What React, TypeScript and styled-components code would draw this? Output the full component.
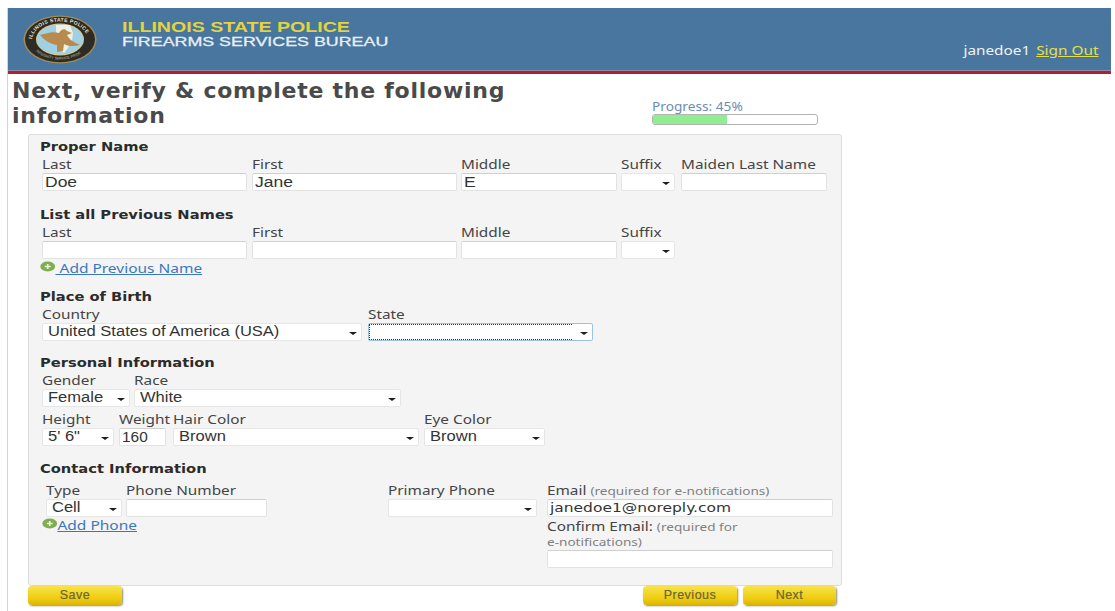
import React from "react";
import styled, { createGlobalStyle } from "styled-components";

const GlobalStyle = createGlobalStyle`
  html, body {
    margin: 0;
    padding: 0;
    background: #fff;
    overflow: hidden;
  }
  body {
    font-family: "Noto Sans", "DejaVu Sans", sans-serif;
    color: #333;
  }
`;

const SealLogo = () => (
  <svg width="74" height="49" viewBox="0 0 74 49">
    <defs>
      <path id="sealTop" d="M9 25 A28 18.5 0 0 1 65 25" />
      <path id="sealBottom" d="M7 24 A30 20.5 0 0 0 67 24" />
    </defs>
    <ellipse cx="37" cy="24.5" rx="36.5" ry="24" fill="#a08c58" />
    <ellipse cx="37" cy="24.5" rx="35" ry="22.8" fill="#2e2b25" />
    <ellipse cx="37" cy="24.5" rx="24" ry="16" fill="#d8c88e" />
    <ellipse cx="37" cy="24.5" rx="23" ry="15" fill="#9fd0e4" />
    <path d="M33 10 L47 10 L50 18 L49 26 L45 33 L41 38 L36 34 L33 24 Z" fill="#eef0e4" />
    <path
      d="M17 20 C24 18 30 16 36 18 C38 14 42 13 44 16 L49 18 L44 20 C46 24 50 27 57 30 C50 32 44 31 41 29 L40 36 L34 37 L34 30 C27 29 21 25 17 20 Z"
      fill="#b98a4e"
    />
    <text fontFamily="Liberation Sans, sans-serif" fontSize="5" fontWeight="700" fill="#ece6cc">
      <textPath href="#sealTop" startOffset="1" textLength="66">
        ILLINOIS STATE POLICE
      </textPath>
    </text>
    <text fontFamily="Liberation Sans, sans-serif" fontSize="3.6" fill="#c9c2a4">
      <textPath href="#sealBottom" startOffset="14">
        INTEGRITY SERVICE PRIDE
      </textPath>
    </text>
  </svg>
);

const Page = styled.div`
  width: 1115px;
  height: 611px;
  padding: 8px 4px 0 7px;
  box-sizing: border-box;
  overflow: hidden;
`;

const Shell = styled.div`
  border-left: 1px solid #c4d9e8;
  height: 100%;
`;

const Header = styled.header`
  height: 63px;
  background: #48769f;
  border-bottom: 3px solid #b21f35;
  box-shadow: inset 0 -1px 0 #8d8da3;
  display: flex;
`;

const Logo = styled.div`
  padding: 7px 0 0 15px;
  width: 114px;
  box-sizing: border-box;
`;

const Agency = styled.div`
  padding-top: 12px;
  font-family: "Liberation Sans", Arial, sans-serif;
  font-size: 13px;
  line-height: 15px;
`;

const AgencyTop = styled.div`
  color: #e3d43d;
  font-size: 14px;
  font-weight: 700;
  white-space: nowrap;
  transform: scaleX(1.4);
  transform-origin: left;
`;

const AgencySub = styled.div`
  color: #e8eef3;
  font-weight: 400;
  -webkit-text-stroke: 0.3px #e8eef3;
  white-space: nowrap;
  line-height: 14px;
  transform: scaleX(1.372);
  transform-origin: left;
`;

const UserBox = styled.div`
  margin-left: auto;
  padding: 34px 11px 0 0;
  font-size: 13px;
  line-height: 17px;
  color: #f0f3f6;
  white-space: nowrap;
  transform: scaleX(1.18);
  transform-origin: right;
`;

const SignOut = styled.a`
  color: #e4e04a;
  text-decoration: underline;
  margin-left: 5px;
`;

const TitleRow = styled.div`
  display: flex;
  align-items: flex-start;
  height: 60px;
`;

const Title = styled.h1`
  width: 640px;
  box-sizing: border-box;
  margin: 0;
  padding: 4px 120px 0 4px;
  font-family: "DejaVu Sans", sans-serif;
  font-size: 22px;
  line-height: 25px;
  font-weight: 700;
  letter-spacing: 0.75px;
  color: #4a4a4a;
`;

const Progress = styled.div`
  padding: 26px 0 0 4px;
  width: 166px;
`;

const ProgressLabel = styled.div`
  font-size: 12px;
  line-height: 14px;
  color: #6b8db5;
  white-space: nowrap;
  transform: scaleX(1.14);
  transform-origin: left;
`;

const ProgressTrack = styled.div`
  height: 9px;
  border: 1px solid #b4b4b4;
  border-radius: 3px;
  background: #fff;
  overflow: hidden;
`;

const ProgressFill = styled.div`
  height: 100%;
  background: #90ee90;
`;

const Panel = styled.main`
  margin: 0 0 0 20px;
  width: 814px;
  height: 452px;
  box-sizing: border-box;
  background: #f4f4f4;
  border: 1px solid #dcdcdc;
  border-radius: 3px;
  padding: 4px 0 0 11px;
`;

const SectionTitle = styled.h2<{ $top?: number }>`
  margin: ${(p) => p.$top ?? 0}px 0 0;
  padding-bottom: 1px;
  font-family: "DejaVu Sans", sans-serif;
  font-size: 13px;
  line-height: 16px;
  font-weight: 700;
  color: #2b2b2b;
  white-space: nowrap;
  transform: scaleX(1.13);
  transform-origin: left;
`;

const Row = styled.div<{ $left?: number; $top?: number; $gap?: number }>`
  display: flex;
  gap: ${(p) => p.$gap ?? 5}px;
  margin: ${(p) => p.$top ?? 0}px 0 0 ${(p) => p.$left ?? 2}px;
`;

const Field = styled.div<{ $w: number; $ml?: number }>`
  width: ${(p) => p.$w}px;
  margin-left: ${(p) => p.$ml ?? 0}px;
  flex: none;
`;

const Label = styled.label`
  display: block;
  font-size: 13px;
  line-height: 17px;
  height: 17px;
  color: #444;
  white-space: nowrap;
  transform: scaleX(1.18);
  transform-origin: left;
`;

const InputBox = styled.div`
  height: 18px;
  box-sizing: border-box;
  background: #fff;
  border: 1px solid #e2e2e2;
  border-top-color: #d0d0d0;
  border-radius: 2px;
  padding: 0 4px 0 2px;
  font-family: "Liberation Sans", Arial, sans-serif;
  font-size: 14px;
  line-height: 16px;
  color: #333;
  white-space: nowrap;
`;

const ValueText = styled.span<{ $x: number }>`
  display: inline-block;
  transform: scaleX(${(p) => p.$x});
  transform-origin: left;
`;

const EmailBox = styled(InputBox)`
  font-family: "DejaVu Sans", sans-serif;
  font-size: 13px;
`;

const Input = ({ value, stretch = 1.25 }: { value?: string; stretch?: number }) => (
  <InputBox>{value && <ValueText $x={stretch}>{value}</ValueText>}</InputBox>
);

const SelectBox = styled.div<{ $focus?: boolean }>`
  position: relative;
  height: 18px;
  box-sizing: border-box;
  background: #fff;
  border: 1px solid ${(p) => (p.$focus ? "#9cc3e3" : "#e6e6e6")};
  border-radius: 2px;
  padding: 0 16px 0 5px;
  font-family: "Liberation Sans", Arial, sans-serif;
  font-size: 14px;
  line-height: 15px;
  color: #333;
  white-space: nowrap;
`;

const Caret = styled.span`
  position: absolute;
  right: 4px;
  top: 8px;
  border-top: 3px solid #1c1c1c;
  border-left: 4px solid transparent;
  border-right: 4px solid transparent;
`;

const FocusRing = styled.span`
  position: absolute;
  left: 0;
  top: 0;
  bottom: 0;
  right: 20px;
  border: 1px dotted #333;
  border-right: 0;
`;

const Select = ({ value, focus }: { value?: string; focus?: boolean }) => (
  <SelectBox $focus={focus}>
    {focus && <FocusRing />}
    {value && <ValueText $x={1.18}>{value}</ValueText>}
    <Caret />
  </SelectBox>
);

const AddLink = styled.a<{ $gap: number }>`
  display: inline-flex;
  align-items: center;
  font-size: 13px;
  line-height: 14px;
  color: #3a78bd;
  text-decoration: underline;
  white-space: pre;
  transform: scaleX(1.19);
  transform-origin: left;

  svg {
    margin: -3px ${(p) => p.$gap}px 0 0;
    flex: none;
  }
`;

const AddRow = styled.div<{ $left: number; $top: number }>`
  display: flex;
  margin: ${(p) => p.$top}px 0 0 ${(p) => p.$left}px;
  height: 14px;
`;

const PlusIcon = () => (
  <svg width="13" height="11" viewBox="0 0 13 11">
    <ellipse cx="6.5" cy="5.5" rx="6.2" ry="5" fill="#7fae4f" />
    <path d="M6.5 3v5M4 5.5h5" stroke="#e8f3d8" strokeWidth="1.4" />
  </svg>
);

const ContactRow = styled.div`
  display: flex;
  margin-top: 4px;
`;

const ContactLeft = styled.div`
  width: 348px;
  flex: none;
  padding-left: 6px;
  box-sizing: border-box;
`;

const PrimaryColumn = styled.div`
  width: 159px;
  flex: none;
`;

const EmailColumn = styled.div`
  width: 286px;
  flex: none;
`;

const Hint = styled.span`
  font-size: 11.5px;
  color: #808080;
`;

const ConfirmLabel = styled.div`
  margin-top: 2px;
  font-size: 13px;
  line-height: 15px;
  color: #444;
  white-space: nowrap;
  transform: scaleX(1.18);
  transform-origin: left;
`;

const HintLine = styled.div`
  font-size: 11.5px;
  line-height: 15px;
  margin-bottom: 1px;
  color: #808080;
  white-space: nowrap;
  transform: scaleX(1.18);
  transform-origin: left;
`;

const Actions = styled.div`
  display: flex;
  gap: 6px;
  width: 808px;
  margin-left: 20px;
`;

const ActionButton = styled.button<{ $w: number; $push?: boolean }>`
  width: ${(p) => p.$w}px;
  height: 19px;
  margin-left: ${(p) => (p.$push ? "auto" : 0)};
  padding: 0;
  border: 0;
  border-radius: 4px;
  background: linear-gradient(#f7e34a, #eeca0c 70%, #d9b408);
  box-shadow: 1px 1px 2px #8d8d6a;
  font-family: "Liberation Sans", Arial, sans-serif;
  font-size: 12.5px;
  line-height: 17px;
  letter-spacing: 0.5px;
  color: #6b6436;
  -webkit-text-stroke: 0.2px #6b6436;
`;

export default function App() {
  return (
    <>
      <GlobalStyle />
      <Page>
        <Shell>
          <Header>
            <Logo>
              <SealLogo />
            </Logo>
            <Agency>
              <AgencyTop>ILLINOIS STATE POLICE</AgencyTop>
              <AgencySub>FIREARMS SERVICES BUREAU</AgencySub>
            </Agency>
            <UserBox>
              janedoe1<SignOut href="#">Sign Out</SignOut>
            </UserBox>
          </Header>
          <TitleRow>
            <Title>Next, verify &amp; complete the following information</Title>
            <Progress>
              <ProgressLabel>Progress: 45%</ProgressLabel>
              <ProgressTrack>
                <ProgressFill style={{ width: "45%" }} />
              </ProgressTrack>
            </Progress>
          </TitleRow>
          <Panel>
            <SectionTitle>Proper Name</SectionTitle>
            <Row>
              <Field $w={205}>
                <Label>Last</Label>
                <Input value="Doe" />
              </Field>
              <Field $w={205}>
                <Label>First</Label>
                <Input value="Jane" />
              </Field>
              <Field $w={156} $ml={-1}>
                <Label>Middle</Label>
                <Input value="E" />
              </Field>
              <Field $w={54} $ml={-1}>
                <Label>Suffix</Label>
                <Select />
              </Field>
              <Field $w={146} $ml={1}>
                <Label>Maiden Last Name</Label>
                <Input />
              </Field>
            </Row>
            <SectionTitle $top={16}>List all Previous Names</SectionTitle>
            <Row>
              <Field $w={205}>
                <Label>Last</Label>
                <Input />
              </Field>
              <Field $w={205}>
                <Label>First</Label>
                <Input />
              </Field>
              <Field $w={156} $ml={-1}>
                <Label>Middle</Label>
                <Input />
              </Field>
              <Field $w={54} $ml={-1}>
                <Label>Suffix</Label>
                <Select />
              </Field>
            </Row>
            <AddRow $left={0} $top={2}>
              <AddLink href="#" $gap={0}>
                <PlusIcon /> Add Previous Name
              </AddLink>
            </AddRow>
            <SectionTitle $top={14}>Place of Birth</SectionTitle>
            <Row $gap={6}>
              <Field $w={320}>
                <Label>Country</Label>
                <Select value="United States of America (USA)" />
              </Field>
              <Field $w={225}>
                <Label>State</Label>
                <Select focus />
              </Field>
            </Row>
            <SectionTitle $top={14}>Personal Information</SectionTitle>
            <Row $gap={4}>
              <Field $w={88}>
                <Label>Gender</Label>
                <Select value="Female" />
              </Field>
              <Field $w={267}>
                <Label>Race</Label>
                <Select value="White" />
              </Field>
            </Row>
            <Row $gap={5} $top={4}>
              <Field $w={72}>
                <Label>Height</Label>
                <Select value={"5' 6\""} />
              </Field>
              <Field $w={47}>
                <Label>Weight</Label>
                <Input value="160" stretch={1.1} />
              </Field>
              <Field $w={246} $ml={2}>
                <Label>Hair Color</Label>
                <Select value="Brown" />
              </Field>
              <Field $w={121}>
                <Label>Eye Color</Label>
                <Select value="Brown" />
              </Field>
            </Row>
            <SectionTitle $top={15}>Contact Information</SectionTitle>
            <ContactRow>
              <ContactLeft>
                <Row $left={0} $gap={4}>
                  <Field $w={76}>
                    <Label>Type</Label>
                    <Select value="Cell" />
                  </Field>
                  <Field $w={141}>
                    <Label>Phone Number</Label>
                    <Input />
                  </Field>
                </Row>
                <AddRow $left={-4} $top={1}>
                  <AddLink href="#" $gap={0}>
                    <PlusIcon />
                    Add Phone
                  </AddLink>
                </AddRow>
              </ContactLeft>
              <PrimaryColumn>
                <Field $w={149}>
                  <Label>Primary Phone</Label>
                  <Select />
                </Field>
              </PrimaryColumn>
              <EmailColumn>
                <Label>
                  Email <Hint>(required for e-notifications)</Hint>
                </Label>
                <EmailBox>
                  <ValueText $x={1.19}>janedoe1@noreply.com</ValueText>
                </EmailBox>
                <ConfirmLabel>
                  Confirm Email: <Hint>(required for</Hint>
                </ConfirmLabel>
                <HintLine>e-notifications)</HintLine>
                <Input />
              </EmailColumn>
            </ContactRow>
          </Panel>
          <Actions>
            <ActionButton $w={94}>Save</ActionButton>
            <ActionButton $w={94} $push>
              Previous
            </ActionButton>
            <ActionButton $w={93}>Next</ActionButton>
          </Actions>
        </Shell>
      </Page>
    </>
  );
}
